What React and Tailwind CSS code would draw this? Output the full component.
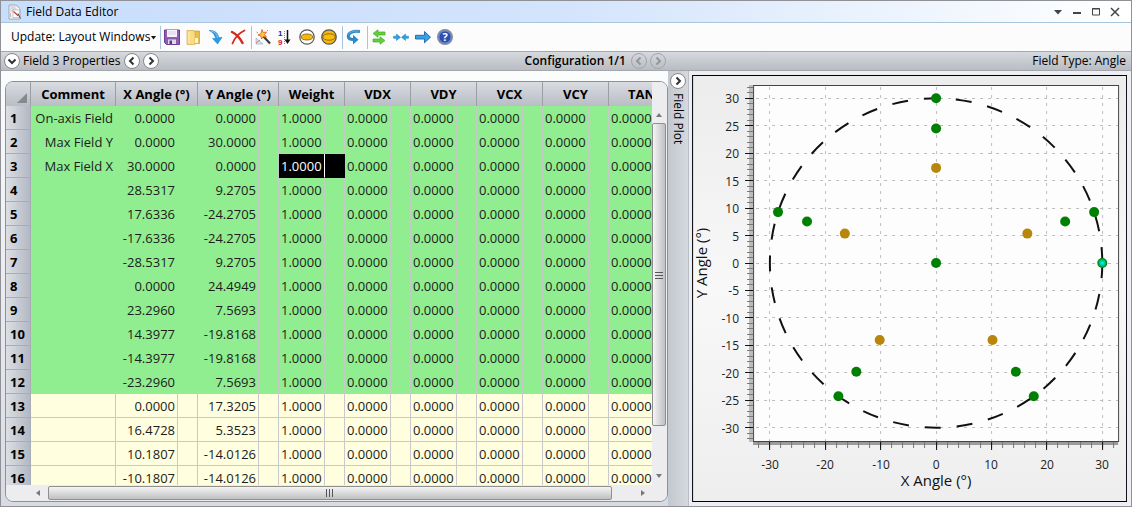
import React from 'react';
import clsx from 'clsx';

const fields = [
  { comment: 'On-axis Field', x: 0, y: 0 },
  { comment: 'Max Field Y', x: 0, y: 30 },
  { comment: 'Max Field X', x: 30, y: 0 },
  { x: 28.5317, y: 9.2705 },
  { x: 17.6336, y: -24.2705 },
  { x: -17.6336, y: -24.2705 },
  { x: -28.5317, y: 9.2705 },
  { x: 0, y: 24.4949 },
  { x: 23.296, y: 7.5693 },
  { x: 14.3977, y: -19.8168 },
  { x: -14.3977, y: -19.8168 },
  { x: -23.296, y: 7.5693 },
  { x: 0, y: 17.3205 },
  { x: 16.4728, y: 5.3523 },
  { x: 10.1807, y: -14.0126 },
  { x: -10.1807, y: -14.0126 },
  { x: -16.4728, y: 5.3523 },
];

const GREEN_COUNT = 12;
const SELECTED_ROW = 2;
const factors = ['Weight', 'VDX', 'VDY', 'VCX', 'VCY', 'TAN'];

const SaveIcon = () => (
  <svg className="h-4 w-4" viewBox="0 0 16 16">
    <path d="M0.5 1h15v14.500h-13l-2-2z" fill="#8f5cb5" stroke="#6d3f94" />
    <path d="M3 1h10v7H3z" fill="#f6f3fa" />
    <path d="M4 3h8M4 5h8" stroke="#d9cfe4" />
    <path d="M4 10.500h8V15H4z" fill="#dcdce4" />
    <path d="M5.500 11.500h2.500V15H5.500z" fill="#5d3a80" />
  </svg>
);

const FolderIcon = () => (
  <svg className="h-4 w-4" viewBox="0 0 16 16">
    <path d="M7 2h6.500v12.500H7z" fill="#e8bd4c" stroke="#c39a35" strokeWidth="0.700" />
    <path d="M1 1.500h6.500l1.500 2v12H1z" fill="#f7dc83" stroke="#d2aa48" strokeWidth="0.700" />
    <path d="M9 9h3v5H9z" fill="#fff4c6" />
    <path d="M3 3v11" stroke="#fff0b4" />
  </svg>
);

const RefreshArrowIcon = () => (
  <svg className="h-4 w-4" viewBox="0 0 16 16">
    <path d="M1 1.500c5-.500 9 2 9.800 7H14l-4.500 6.500-5-5.500h3C7 6 5 3 1 1.500z" fill="#2b9be0" stroke="#1c7fc4" strokeWidth="0.500" />
    <path d="M3 2c4 .500 6 3 6.500 7" stroke="#7cc8f4" fill="none" />
  </svg>
);

const DeleteIcon = () => (
  <svg className="h-4 w-4" viewBox="0 0 16 16" fill="none" stroke="#d4281c" strokeLinecap="round">
    <path d="M2 3c4 2 8 6 10.500 11" strokeWidth="2.500" />
    <path d="M14.500 1.500C9 4 5 8 2.500 14.500" strokeWidth="1.800" />
  </svg>
);

const WandIcon = () => (
  <svg className="h-4 w-4" viewBox="0 0 16 16">
    <path d="M8 7l7 7.500" stroke="#3c3c3c" strokeWidth="2.200" />
    <path d="M7 .500l1.300 3 3.200-.500-2 2.500 2 2.500-3.200-.300L6.500 10 6 7 3 6l3-1.500z" fill="#ffc93c" stroke="#e2571e" strokeWidth="0.800" />
    <path d="M1 9v6h7z" fill="#cfe6f1" stroke="#86a9bd" strokeWidth="0.600" />
    <path d="M1 14l4-3" stroke="#e7574f" strokeWidth="0.800" />
    <path d="M1.500 3l1.500 1M12 1l1 1" stroke="#e58a1e" />
  </svg>
);

const SortIcon = () => (
  <svg className="h-5 w-4 font-['Liberation_Sans',sans-serif]" viewBox="0 0 16 20">
    <text x="1" y="9" fontSize="8" fontWeight="bold" fill="#1b1f9e">1</text>
    <text x="1" y="18" fontSize="8" fontWeight="bold" fill="#e0121b">9</text>
    <path d="M7.500 4v13" stroke="#8a8a8a" strokeDasharray="1 1" />
    <path d="M10.500 3v11" stroke="#111" strokeWidth="1.500" />
    <path d="M7.500 12.500h6l-3 4.500z" fill="#111" />
  </svg>
);

const LensIcon = () => (
  <svg className="h-4 w-4" viewBox="0 0 16 16">
    <circle cx="8" cy="8" r="7.200" fill="#fff" stroke="#555" strokeWidth="1.200" />
    <ellipse cx="8" cy="8" rx="6" ry="3" fill="#f7b80b" stroke="#86640c" strokeWidth="0.900" />
  </svg>
);

const FullLensIcon = () => (
  <svg className="h-4 w-4" viewBox="0 0 16 16">
    <circle cx="8" cy="8" r="7.200" fill="#f7b80b" stroke="#555" strokeWidth="1.300" />
    <ellipse cx="8" cy="8" rx="6.200" ry="3.200" fill="#f9bd10" stroke="#86640c" strokeWidth="0.900" />
  </svg>
);

const UndoIcon = () => (
  <svg className="h-4 w-4" viewBox="0 0 16 16">
    <path d="M14 2.500C6.500 1.500 2 4 2.300 7.500c.200 2 1.700 3 4.700 3" fill="none" stroke="#2c8acb" strokeWidth="3" />
    <path d="M7 5.800l5.500 4.900L7 15.500z" fill="#2c8acb" />
    <path d="M13 2C8 1.600 4 2.800 2.500 5.500" fill="none" stroke="#7dbbe6" strokeWidth="0.800" />
  </svg>
);

const SwapIcon = () => (
  <svg className="h-4 w-4" viewBox="0 0 16 16" fill="#62cf3c" stroke="#45ad27" strokeWidth="0.700">
    <path d="M2 4.500L7 .800V3h7v3H7v2.200z" />
    <path d="M14 11.500L9 7.800V10H2v3h7v2.200z" />
  </svg>
);

const MergeIcon = () => (
  <svg className="h-4 w-4" viewBox="0 0 16 16" fill="#2f9de4" stroke="#1d7fc2" strokeWidth="0.500">
    <path d="M.500 7.200h3V5l4 3.300-4 3.200V9.300h-3z" />
    <path d="M15.500 7.200h-3V5l-4 3.300 4 3.200V9.300h3z" />
  </svg>
);

const RightArrowIcon = () => (
  <svg className="h-4 w-4" viewBox="0 0 16 16">
    <path d="M.500 6.300h9V2.500l6 5.700-6 5.600V10h-9z" fill="#3b9fe6" stroke="#1a66a8" strokeWidth="0.900" />
  </svg>
);

const HelpIcon = () => (
  <svg className="h-4 w-4" viewBox="0 0 16 16">
    <circle cx="8" cy="8" r="7.400" fill="#2d50ae" stroke="#8b919c" strokeWidth="1.200" />
    <circle cx="8" cy="8" r="6.200" fill="none" stroke="#c3cbdc" strokeWidth="0.600" />
    <text x="8" y="12" fontSize="11" fontWeight="bold" fill="#fff" textAnchor="middle">?</text>
  </svg>
);

const toolGroups = [
  [
    ['Save', SaveIcon],
    ['Load', FolderIcon],
    ['Insert', RefreshArrowIcon],
    ['Delete', DeleteIcon],
  ],
  [
    ['Field Wizard', WandIcon],
    ['Sort', SortIcon],
    ['Set Vignetting', LensIcon],
    ['Clear Vignetting', FullLensIcon],
  ],
  [['Reset', UndoIcon]],
  [
    ['Convert', SwapIcon],
    ['Fit Columns', MergeIcon],
    ['Go To', RightArrowIcon],
    ['Help', HelpIcon],
  ],
];

const chevrons = {
  down: 'M4.500 6.500L8 10l3.500-3.500',
  left: 'M9.500 4.500L6 8l3.500 3.500',
  right: 'M6.500 4.500L10 8l-3.500 3.500',
};

const RoundButton = ({ dir, label, disabled }) => (
  <button
    aria-label={label}
    disabled={disabled}
    className={clsx(
      'h-4 w-4 shrink-0 rounded-full border',
      disabled ? 'border-[#a2a5aa] text-[#94979c]' : 'border-[#85888d] bg-white text-[#333]'
    )}
  >
    <svg className="-m-px h-4 w-4" viewBox="0 0 16 16" fill="none" stroke="currentColor" strokeWidth="2">
      <path d={chevrons[dir]} />
    </svg>
  </button>
);

const TitleBar = () => (
  <header className="flex h-[22px] shrink-0 items-center border-b border-[#a9c6dc] bg-linear-to-r from-[#c8defd] via-[#d3e4fc] to-white pl-1.5 pr-2.5">
    <svg className="h-4 w-4" viewBox="0 0 16 16">
      <path d="M2 1h7l4 3.500V15H2z" fill="#f4f4f4" stroke="#9a9a9a" strokeWidth="0.800" />
      <path d="M3.500 3h5M3.500 5h6M3.500 7h3M3.500 9v4" stroke="#b9bec3" />
      <path d="M6 6h6.500v7.500H6z" fill="#fff" stroke="#a9a9a9" strokeWidth="0.600" />
      <path d="M6.500 7.500l5 4.500" stroke="#c23b32" strokeWidth="1.200" />
      <path d="M11 9.500l2.500 5" stroke="#555" />
    </svg>
    <h1 className="ml-[3px] flex-1 text-xs">Field Data Editor</h1>
    <div className="flex gap-[7px] text-[#444]">
      <button aria-label="Window menu">
        <svg className="h-3 w-3" viewBox="0 0 12 12"><path d="M2 4h8L6 8.500z" fill="currentColor" /></svg>
      </button>
      <button aria-label="Minimize">
        <svg className="h-3 w-3" viewBox="0 0 12 12"><path d="M2 6h8v2H2z" fill="currentColor" /></svg>
      </button>
      <button aria-label="Maximize">
        <svg className="h-3 w-3" viewBox="0 0 12 12" fill="none" stroke="currentColor">
          <path d="M2.500 2.500h7v6.500h-7z" /><path d="M2 3h8" />
        </svg>
      </button>
      <button aria-label="Close">
        <svg className="h-3 w-3" viewBox="0 0 12 12" fill="none" stroke="currentColor" strokeWidth="1.500">
          <path d="M2 2l8 8M10 2l-8 8" />
        </svg>
      </button>
    </div>
  </header>
);

const ToolBar = () => (
  <div className="flex h-[28px] shrink-0 items-center bg-[#fcfcfd]">
    <button className="flex w-[159px] items-center gap-px pl-2.5 text-xs whitespace-nowrap">
      Update: Layout Windows
      <svg className="h-[5px] w-[5px] shrink-0" viewBox="0 0 5 5"><path d="M0 1h5L2.500 4.500z" fill="#111" /></svg>
    </button>
    {toolGroups.map((group) => (
      <div key={group[0][0]} className="flex h-[23px] items-center gap-1.5 border-l border-[#aac4dd] pr-[5px] pl-[3px]">
        {group.map(([label, Icon]) => (
          <button key={label} aria-label={label}>
            <Icon />
          </button>
        ))}
      </div>
    ))}
  </div>
);

const PropertyBar = () => (
  <div className="grid h-5 shrink-0 grid-cols-[minmax(0,167fr)_minmax(0,116fr)] items-center border-y border-[#a3a7ac] bg-linear-to-b from-[#d6d9dd] to-[#b9bcc2] text-xs">
    <div className="flex items-center gap-[3px] pr-0.5 pl-[3px]">
      <RoundButton dir="down" label="Expand properties" />
      <span className="whitespace-nowrap">Field 3 Properties</span>
      <RoundButton dir="left" label="Previous field" />
      <RoundButton dir="right" label="Next field" />
      <span className="mr-0.5 ml-auto font-semibold">Configuration 1/1</span>
      <RoundButton dir="left" label="Previous configuration" disabled />
      <RoundButton dir="right" label="Next configuration" disabled />
    </div>
    <div className="pr-[5px] text-right">Field Type: Angle</div>
  </div>
);

const FieldTable = () => (
  <table className="w-[669px] table-fixed border-separate border-spacing-0 text-[13px] leading-5">
    <colgroup>
      <col className="w-[25px]" />
      <col className="w-[85px]" />
      <col className="w-[62px]" />
      <col className="w-5" />
      <col className="w-[61px]" />
      <col className="w-5" />
      {factors.map((name) => (
        <React.Fragment key={name}>
          <col className="w-[46px]" />
          <col className="w-5" />
        </React.Fragment>
      ))}
    </colgroup>
    <thead>
      <tr className="h-6 bg-linear-to-b from-[#d9dce1] to-[#b9bdc4] whitespace-nowrap">
        <th className="border-r border-[#9a9ea5] p-0" aria-label="Select all">
          <svg className="ml-auto h-6 w-6" viewBox="0 0 24 24"><path d="M21 11v10H11z" fill="#858a90" /></svg>
        </th>
        <th className="border-r border-[#9a9ea5] p-0">Comment</th>
        {['X Angle (°)', 'Y Angle (°)', ...factors].map((name) => (
          <th key={name} colSpan={2} className="border-r border-[#9a9ea5] p-0">{name}</th>
        ))}
      </tr>
    </thead>
    <tbody>
      {fields.slice(0, 16).map((field, i) => {
        const cell = clsx(
          'border-r border-b p-0',
          i < GREEN_COUNT ? 'border-[#c4cbc4] bg-[#90ee90]' : 'border-[#c9c9c9] bg-[#ffffe0]'
        );
        const selected = 'border-r border-b border-black bg-black p-0 text-white';
        return (
          <tr key={i} className="h-6 text-[#1c1c1c]">
            <th className="border-r border-b border-[#a9aeb6] bg-linear-to-r from-[#dcdfe4] to-[#b2b8c3] p-0 pl-1 text-left text-black">
              {i + 1}
            </th>
            <td
              className={clsx(
                'border-r border-b p-0 pr-0.5 text-right whitespace-nowrap',
                i < GREEN_COUNT ? 'border-r-[#c4cbc4] border-b-[#90ee90] bg-[#90ee90]' : 'border-[#c9c9c9] bg-[#ffffe0]'
              )}
            >
              {field.comment}
            </td>
            <td className={clsx(cell, 'pr-0.5 text-right')}>{field.x.toFixed(4)}</td>
            <td className={cell} />
            <td className={clsx(cell, 'pr-0.5 text-right')}>{field.y.toFixed(4)}</td>
            <td className={cell} />
            {factors.map((name) => {
              const active = i === SELECTED_ROW && name === 'Weight';
              return (
                <React.Fragment key={name}>
                  <td className={clsx(active ? selected : cell, active && 'border-r-white', 'pl-0.5')}>
                    {name === 'Weight' ? '1.0000' : '0.0000'}
                  </td>
                  <td className={active ? selected : cell} />
                </React.Fragment>
              );
            })}
          </tr>
        );
      })}
    </tbody>
  </table>
);

const VerticalScroll = () => (
  <div className="flex w-[15px] shrink-0 flex-col items-center bg-[#ededef] pt-[30px] pb-1.5">
    <svg className="h-[5px] w-2" viewBox="0 0 8 5"><path d="M1 5h6L4 1z" fill="#777" /></svg>
    <div className="mt-1.5 mb-12 flex w-[14px] flex-1 items-center justify-center rounded-xs border border-[#8f8f8f] bg-linear-to-r from-[#f5f5f5] to-[#bfc0c3]">
      <svg className="h-2 w-2" viewBox="0 0 8 8"><path d="M0 1.500h8M0 4.500h8M0 7.500h8" stroke="#555" /></svg>
    </div>
    <svg className="h-[5px] w-2" viewBox="0 0 8 5"><path d="M1 0h6L4 4z" fill="#777" /></svg>
  </div>
);

const HorizontalScroll = () => (
  <div className="flex h-4 shrink-0 items-center bg-[#ededef] pr-[22px] pl-[30px]">
    <svg className="h-2 w-[5px]" viewBox="0 0 5 8"><path d="M4 1v6L0 4z" fill="#777" /></svg>
    <div className="mr-7 ml-[7px] flex h-[14px] flex-1 items-center justify-center rounded-xs border border-[#8f8f8f] bg-linear-to-b from-[#f5f5f5] to-[#bfc0c3]">
      <svg className="h-2 w-2" viewBox="0 0 8 8"><path d="M.500 0v8M3.500 0v8M6.500 0v8" stroke="#555" /></svg>
    </div>
    <svg className="h-2 w-[5px]" viewBox="0 0 5 8"><path d="M1 1v6l4-3z" fill="#777" /></svg>
  </div>
);

// Degrees to plot units
const px = (deg) => 244 + deg * 5.54;
const py = (deg) => 188 - deg * 5.49;

const range = (from, to, step) => {
  const out = [];
  for (let v = from; v <= to; v += step) out.push(v);
  return out;
};

const FieldPlot = () => (
  <svg className="h-full w-full" viewBox="0 0 435 427" role="img" aria-label="Field plot">
    <defs>
      <linearGradient id="plotBg" x1="0" y1="0" x2="0" y2="1">
        <stop offset="0" stopColor="#ececec" />
        <stop offset="0.5" stopColor="#f8f8f8" />
        <stop offset="1" stopColor="#eeeeee" />
      </linearGradient>
      <radialGradient id="activePoint">
        <stop offset="0" stopColor="#00ffff" />
        <stop offset="1" stopColor="#00a050" />
      </radialGradient>
    </defs>
    <rect x="0.5" y="0.5" width="434" height="426" fill="url(#plotBg)" stroke="#000" />
    <rect x="57" y="10" width="4" height="357" fill="#bbb" />
    <rect x="61" y="366" width="365" height="4" fill="#9a9c9a" />
    <rect x="61.5" y="10.5" width="365" height="356" fill="#fdfdfd" stroke="#444" />

    <g stroke="#bdbdbd" strokeDasharray="3 5">
      {range(-30, 30, 10).map((v) => (
        <path key={v} d={`M${Math.floor(px(v)) + 0.5} 12V366`} />
      ))}
      {range(-30, 30, 5).map((v) => (
        <path key={v} d={`M64 ${Math.floor(py(v)) + 0.5}H426`} />
      ))}
    </g>

    <g stroke="#777">
      {range(-32, 32, 1).map((v) => (
        <path key={v} d={`M55 ${Math.floor(py(v)) + 0.5}H61`} />
      ))}
      {range(-32, 32, 2).map((v) => (
        <path key={v} d={`M${Math.floor(px(v)) + 0.5} 367V373`} />
      ))}
    </g>
    <g stroke="#111">
      {range(-30, 30, 5).map((v) => (
        <path key={v} d={`M53 ${Math.floor(py(v)) + 0.5}H61`} />
      ))}
      {range(-30, 30, 10).map((v) => (
        <path key={v} d={`M${Math.floor(px(v)) + 0.5} 367V375`} />
      ))}
    </g>

    <g fontSize="12" fill="#222">
      {range(-30, 30, 5).map((v) => (
        <text key={v} x="47" y={Math.round(py(v)) + 5} textAnchor="end">{v}</text>
      ))}
      {range(-30, 30, 10).map((v) => (
        <text key={v} x={Math.round(px(v))} y="394" textAnchor="middle">{v}</text>
      ))}
    </g>
    <text x="244" y="411" fontSize="15" fill="#111" textAnchor="middle">X Angle (°)</text>
    <text transform="translate(15 188) rotate(-90)" fontSize="15" fill="#111" textAnchor="middle">Y Angle (°)</text>

    <path
      d={`M${px(30)} 188A${30 * 5.54} ${30 * 5.49} 0 1 0 ${px(-30)} 188A${30 * 5.54} ${30 * 5.49} 0 1 0 ${px(30)} 188`}
      fill="none"
      stroke="#111"
      strokeWidth="2"
      strokeDasharray="16 16"
    />
    {fields.map((field, i) => (
      <circle key={i} cx={px(field.x)} cy={py(field.y)} r="5" fill={i < GREEN_COUNT ? '#008000' : '#b8860b'} />
    ))}
    <circle cx={px(30)} cy={py(0)} r="4" fill="url(#activePoint)" />
  </svg>
);

export default function App() {
  return (
    <div className="flex h-screen flex-col overflow-hidden border border-[#8f9196] bg-[#dfe1e8] font-['Open_Sans','Noto_Sans',sans-serif] text-black">
      <TitleBar />
      <ToolBar />
      <PropertyBar />
      <main className="grid min-h-0 flex-1 grid-cols-[minmax(0,167fr)_minmax(0,116fr)] grid-rows-[minmax(0,1fr)] bg-linear-to-b from-[#fbfcfc] to-[#d9dbe4]">
        <section className="flex min-h-0 pt-2.5 pb-1 pl-1" aria-label="Field data">
          <div className="flex min-w-0 flex-1 flex-col overflow-hidden rounded-lg border border-[#7f94ab]">
            <div className="flex min-h-0 flex-1">
              <div className="min-w-0 flex-1 overflow-hidden">
                <FieldTable />
              </div>
              <VerticalScroll />
            </div>
            <HorizontalScroll />
          </div>
        </section>
        <section className="flex min-h-0">
          <div className="flex w-5 shrink-0 flex-col items-center gap-1 bg-linear-to-r from-[#c3c8cf] to-[#d5d9de] pt-0.5">
            <RoundButton dir="right" label="Collapse plot" />
            <h2 className="text-xs leading-4 [writing-mode:vertical-rl]">Field Plot</h2>
          </div>
          <div className="min-w-0 flex-1 border-l border-[#b9bdc6] bg-[#eceef4] pt-1 pr-1 pb-1 pl-[3px]">
            <FieldPlot />
          </div>
        </section>
      </main>
    </div>
  );
}
